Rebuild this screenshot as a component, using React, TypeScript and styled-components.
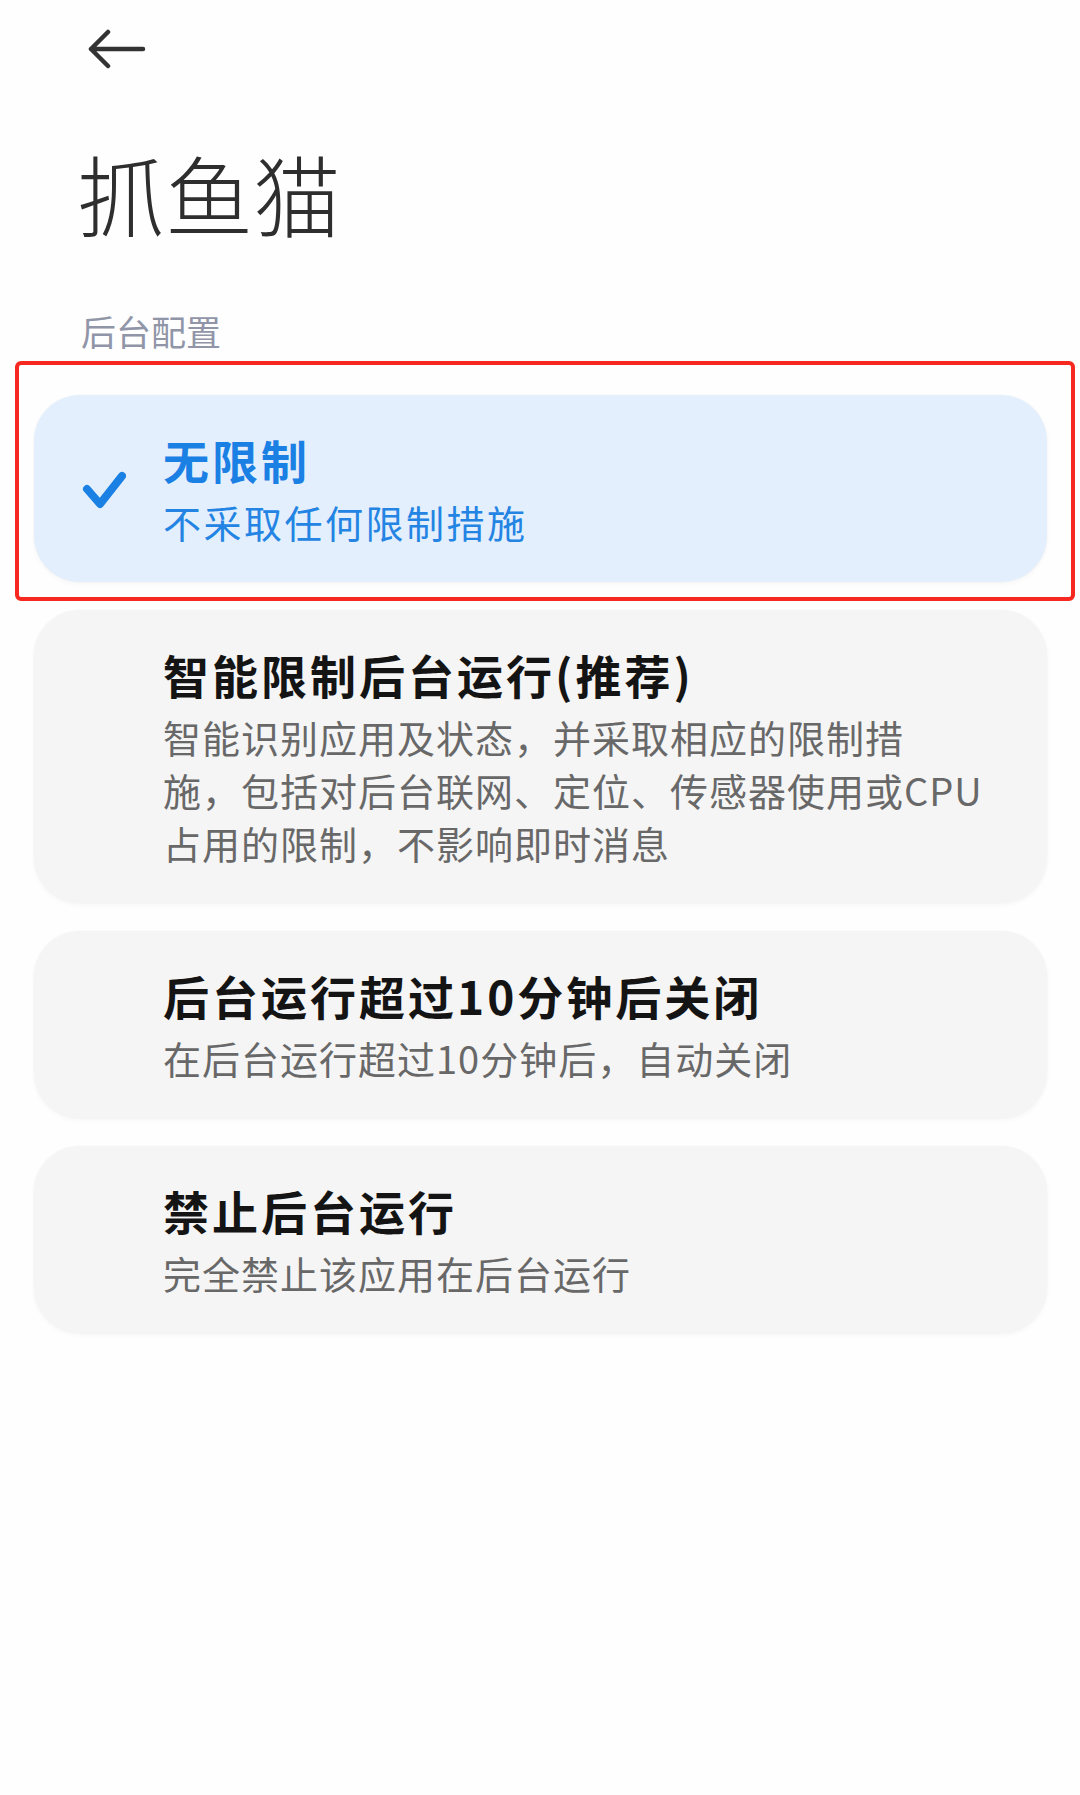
import React, { useState } from 'react';
import styled, { createGlobalStyle, css } from 'styled-components';

interface Option {
  id: string;
  title: string;
  description: string;
}

// "\n" marks the line break the phone puts in the long description
const options: Option[] = [
  { id: 'none', title: '无限制', description: '不采取任何限制措施' },
  {
    id: 'smart',
    title: '智能限制后台运行(推荐)',
    description:
      '智能识别应用及状态，并采取相应的限制措\n施，包括对后台联网、定位、传感器使用或CPU占用的限制，不影响即时消息',
  },
  {
    id: 'ten',
    title: '后台运行超过10分钟后关闭',
    description: '在后台运行超过10分钟后，自动关闭',
  },
  { id: 'block', title: '禁止后台运行', description: '完全禁止该应用在后台运行' },
];

const GlobalStyle = createGlobalStyle`
  html, body {
    margin: 0;
    padding: 0;
    background: #fefefe;
  }
  body {
    font-family: "Noto Sans CJK SC", "Noto Sans", sans-serif;
    -webkit-font-smoothing: antialiased;
  }
`;

const Page = styled.main`
  min-height: 1795px;
  box-sizing: border-box;
  background: #fefefe;
`;

const TopBar = styled.header`
  display: flex;
  align-items: center;
  height: 40px;
  padding: 29px 0 0 86px;
`;

const BackButton = styled.button`
  display: flex;
  padding: 0;
  border: 0;
  background: none;
  cursor: pointer;
`;

const AppTitle = styled.h1`
  margin: 69px 0 0;
  padding-left: 77px;
  font-size: 88px;
  line-height: 108px;
  font-weight: 300;
  color: #2e2e2e;
`;

const SectionLabel = styled.h2`
  margin: 61px 0 0;
  padding-left: 81px;
  font-size: 35px;
  line-height: 48px;
  font-weight: 400;
  color: #9095a8;
`;

const OptionList = styled.div`
  display: flex;
  flex-direction: column;
  gap: 28px;
  margin-top: 40px;
  padding: 0 33px 0 34px;
`;

const Highlight = styled.div`
  position: relative;
`;

const RedFrame = styled.div`
  position: absolute;
  top: -34px;
  left: -19px;
  right: -28px;
  bottom: -19px;
  border: 4px solid #f6281f;
  border-radius: 6px;
  pointer-events: none;
`;

const OptionCard = styled.div<{ $selected: boolean }>`
  display: flex;
  align-items: center;
  box-sizing: border-box;
  padding: 36px 40px 34px 48px;
  border-radius: 46px;
  cursor: pointer;
  background: ${(p) => (p.$selected ? '#e3effc' : '#f5f5f5')};
  box-shadow: 0 0 0 1px rgba(0, 0, 0, 0.012), 0 2px 5px rgba(0, 0, 0, 0.035);
`;

const CheckSlot = styled.div`
  flex: none;
  width: 44px;
  height: 40px;
  margin-right: 37px;
`;

const OptionText = styled.div`
  display: flex;
  flex-direction: column;
  gap: 8px;
  min-width: 0;
`;

const OptionTitle = styled.div<{ $selected: boolean }>`
  font-size: 46px;
  line-height: 56px;
  font-weight: 600;
  letter-spacing: 3px;
  color: ${(p) => (p.$selected ? '#1b80e4' : '#141414')};
`;

const OptionDescription = styled.div<{ $selected: boolean }>`
  font-size: 38px;
  line-height: 53px;
  font-weight: 400;
  letter-spacing: 1px;
  white-space: pre-line;
  color: #686868;
  ${(p) =>
    p.$selected &&
    css`
      letter-spacing: 2.5px;
      color: #2384e4;
    `}
`;

const ArrowIcon = () => (
  <svg width="60" height="40" viewBox="0 0 60 40" fill="none">
    <path
      d="M57 20H5M22 3L5 20l17 17"
      stroke="#333"
      strokeWidth="4.5"
      strokeLinecap="round"
      strokeLinejoin="round"
    />
  </svg>
);

const CheckIcon = () => (
  <svg width="44" height="40" viewBox="0 0 44 40" fill="none">
    <path
      d="M5 19l13 15L40 6"
      stroke="#1b80e4"
      strokeWidth="8"
      strokeLinecap="round"
      strokeLinejoin="round"
    />
  </svg>
);

const App = () => {
  const [selectedId, setSelectedId] = useState('none');

  return (
    <Page>
      <GlobalStyle />
      <TopBar>
        <BackButton aria-label="返回">
          <ArrowIcon />
        </BackButton>
      </TopBar>
      <AppTitle>抓鱼猫</AppTitle>
      <SectionLabel>后台配置</SectionLabel>
      <OptionList>
        {options.map((option, index) => {
          const selected = option.id === selectedId;
          const card = (
            <OptionCard
              key={option.id}
              $selected={selected}
              onClick={() => setSelectedId(option.id)}
            >
              <CheckSlot>{selected && <CheckIcon />}</CheckSlot>
              <OptionText>
                <OptionTitle $selected={selected}>{option.title}</OptionTitle>
                <OptionDescription $selected={selected}>
                  {option.description}
                </OptionDescription>
              </OptionText>
            </OptionCard>
          );

          // the first row carries the red annotation frame from the screenshot
          return index === 0 ? (
            <Highlight key={option.id}>
              {card}
              <RedFrame />
            </Highlight>
          ) : (
            card
          );
        })}
      </OptionList>
    </Page>
  );
};

export default App;
